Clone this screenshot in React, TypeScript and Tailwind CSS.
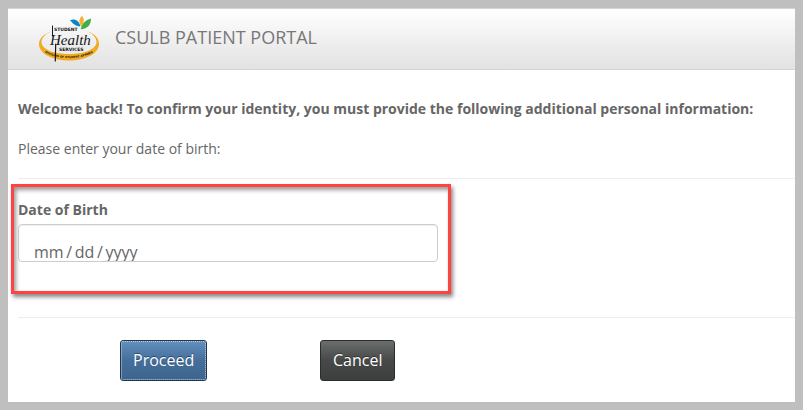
import { useState } from 'react';

function HealthLogo() {
  return (
    <svg
      viewBox="0 0 64 50"
      className="h-[50px] w-16 shrink-0"
      role="img"
      aria-label="Student Health Services"
    >
      <defs>
        <path id="ring-text" d="M6 37 C18 46.500 46 46.500 58 37" />
      </defs>
      <g fill="#f0ab22">
        <path d="M14 17.500C6.500 20.500 2 24.500 2 30C2 39.500 15 46.500 32 46.500C49 46.500 62 39.500 62 30C62 24.500 58 20 51 17.500C56.500 20.500 59.500 24 59.500 28C59.500 35 48 40 32 40C16 40 4.500 35 4.500 28C4.500 24 8 20.500 14 17.500Z" />
      </g>
      <path fill="#0b84c6" d="M33 6.300C38 4.200 42 6.800 43.500 12.500C38 12.500 35.500 9 33 6.300Z" />
      <path fill="#f5b335" d="M44.800 1.800C48 5 47 9.500 44.300 12.500C41.300 8.500 42 5 44.800 1.800Z" />
      <path fill="#43ad49" d="M54 4.500C54 11 50.500 14.800 43.700 15.300C45 9.500 48.500 6 54 4.500Z" />
      <g fill="#161616" fontFamily="'DejaVu Sans', sans-serif" fontWeight="700">
        <text x="17" y="17" fontSize="4.500">
          STUDENT
        </text>
        <text
          x="13"
          y="31"
          fontFamily="'Liberation Serif', serif"
          fontSize="15"
          fontStyle="italic"
          fontWeight="400"
        >
          Health
        </text>
        <text x="22" y="36.500" fontSize="4.500">
          SERVICES
        </text>
        <text fontSize="2.800">
          <textPath href="#ring-text" startOffset="50%" textAnchor="middle">
            DIVISION OF STUDENT AFFAIRS
          </textPath>
        </text>
      </g>
      <g fill="none" stroke="#161616" strokeLinecap="round">
        <path strokeWidth="1" d="M15.500 12V22" />
        <path strokeWidth="1.200" d="M18.700 30L18.300 47" />
      </g>
    </svg>
  );
}

export default function App() {
  const [birthDate, setBirthDate] = useState('');

  return (
    <div className="min-h-screen bg-[#bfbfbf] p-2 font-['Open_Sans',sans-serif] text-sm text-[#666]">
      <div className="bg-white pb-[21px]">
        <header className="flex items-center gap-[14px] border-y border-[#d4d4d4] bg-linear-to-b from-white to-[#e2e2e2] py-[5px] pl-[29px]">
          <HealthLogo />
          <h1 className="pb-1 text-lg text-[#777]">CSULB PATIENT PORTAL</h1>
        </header>

        <main className="pt-[29px] pl-[10px]">
          <p className="font-bold">
            Welcome back! To confirm your identity, you must provide the
            following additional personal information:
          </p>
          <p className="mt-5">Please enter your date of birth:</p>

          <form onSubmit={(e) => e.preventDefault()}>
            <hr className="mt-[19px] border-[#eee]" />
            <div className="mt-[5px] -ml-[7px] max-w-[440px] border-3 border-[#ff4343] px-1 pt-[13px] pb-[29px] shadow-[2px_3px_4px_#888,inset_2px_3px_4px_#999]">
              <label htmlFor="dob" className="block font-bold">
                Date of Birth
              </label>
              <input
                id="dob"
                type="text"
                placeholder={'mm\u2009/\u2009dd\u2009/\u2009yyyy'}
                value={birthDate}
                onChange={(e) => setBirthDate(e.target.value)}
                className="mt-1 block h-[38px] w-[420px] max-w-full rounded border border-[#ccc] px-[15px] pt-[18px] text-base text-[#666] shadow-[inset_0_1px_1px_#eee] placeholder:text-[#666]"
              />
            </div>
            <hr className="mt-[23px] border-[#eee]" />

            <div className="mt-[22px] ml-[102px] grid grid-cols-[200px_auto] justify-items-start">
              <button
                type="submit"
                className="rounded-[3px] border border-[#1c3650] bg-linear-to-b from-[#658fbd] via-[#446e9b] to-[#3e648d] text-base text-white text-shadow-[0_-1px_0_#0006]"
              >
                <span className="block rounded-[2px] border border-dotted border-[#c0d0e0] px-[11px] pt-[6px] pb-[7px]">
                  Proceed
                </span>
              </button>
              <button
                type="button"
                onClick={() => setBirthDate('')}
                className="rounded-[3px] border border-[#2b2c2c] bg-linear-to-b from-[#6b6e6e] via-[#474949] to-[#3d3f3f] px-3 pt-[7px] pb-2 text-base text-white text-shadow-[0_-1px_0_#0006]"
              >
                Cancel
              </button>
            </div>
          </form>
        </main>
      </div>
    </div>
  );
}
